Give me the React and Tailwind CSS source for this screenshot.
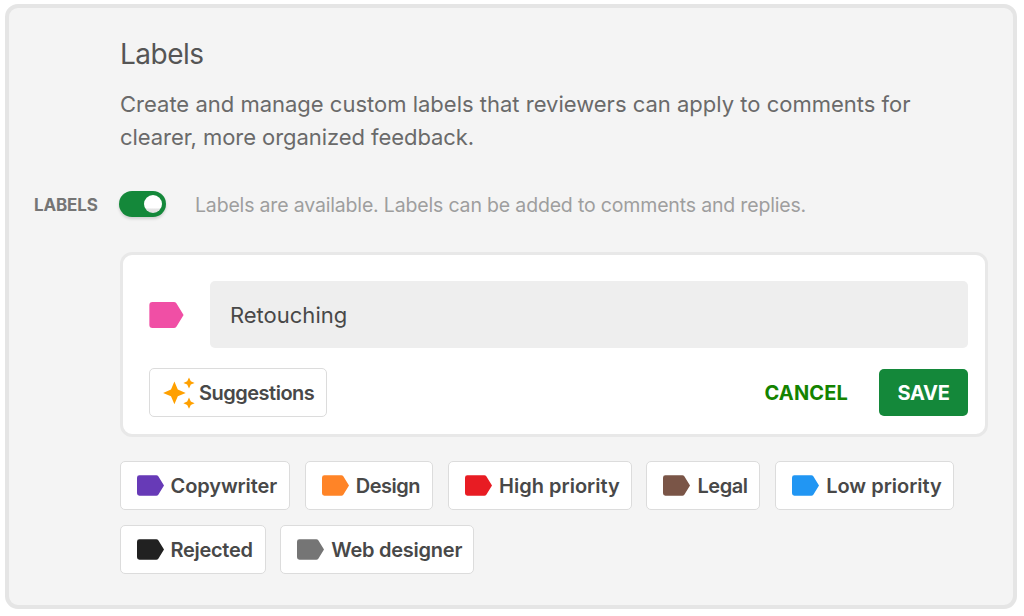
import { useState } from 'react';

const labels = [
  { name: 'Copywriter', color: '#673ab7', width: 'w-[170.5px]', tracking: 'tracking-[-0.1px]' },
  { name: 'Design', color: '#ff8427', width: 'w-[128.5px]', tracking: 'tracking-[-0.5px]' },
  { name: 'High priority', color: '#e81c23', width: 'w-[183.5px]', tracking: 'tracking-[0px]' },
  { name: 'Legal', color: '#7a5547', width: 'w-[114px]', tracking: 'tracking-[-0.45px]' },
  { name: 'Low priority', color: '#2196f3', width: 'w-[179px]', tracking: 'tracking-[0px]' },
  { name: 'Rejected', color: '#212121', width: 'w-[146px]', tracking: 'tracking-[-0.3px]' },
  { name: 'Web designer', color: '#757575', width: 'w-[194px]', tracking: 'tracking-[-0.25px]' },
];

function TagIcon({ color, className }) {
  return (
    <svg viewBox="0 0 27 20.5" fill={color} className={className}>
      <path d="M2.4 0h16.9a2.4 2.4 0 0 1 2 1.05L27 10.25l-5.7 9.2a2.4 2.4 0 0 1-2 1.05H2.4A2.4 2.4 0 0 1 0 18.1V2.4A2.4 2.4 0 0 1 2.4 0z" />
    </svg>
  );
}

function SparkleIcon() {
  return (
    <svg viewBox="0 0 32 32" fill="#ffa000" className="h-8 w-8 shrink-0">
      <path d="M11.4 4.6l3.4 7.9 7.9 3.4-7.9 3.4-3.4 7.9-3.4-7.9L.1 15.9 8 12.5z" />
      <path d="M26 .4l1.8 3.8 3.8 1.7-3.8 1.7L26 11.5l-1.8-3.9-3.8-1.7 3.8-1.7z" />
      <path d="M26 20.6l1.8 3.9 3.8 1.7-3.8 1.7-1.8 3.8-1.8-3.8-3.8-1.7 3.8-1.7z" />
    </svg>
  );
}

export default function App() {
  const [enabled, setEnabled] = useState(true);
  const [name, setName] = useState('Retouching');

  return (
    <div className="h-[616px] w-[1024px] bg-white pt-[4px] pl-[5px] font-['Inter',sans-serif]">
      <div className="h-[605px] w-[1012px] rounded-[13px] border-4 border-[#e5e5e5] bg-[#f4f4f4] pl-[25px]">
        <div className="pl-[86px] pt-[27px]">
          <h2 className="text-[28px] leading-[38px] tracking-[-0.5px] text-[#555]">Labels</h2>
          <p className="mt-[15px] whitespace-nowrap text-[22px] leading-[33px] text-[#6a6a6a]">
            Create and manage custom labels that reviewers can apply to comments for
            <br />
            <span className="tracking-[-0.06px]">clearer, more organized feedback.</span>
          </p>
        </div>

        <div className="mt-[36px] flex h-[27px] items-center">
          <span className="w-[85px] pt-[5px] text-[17px] font-bold tracking-[-0.15px] text-[#757575]">LABELS</span>
          <button
            role="switch"
            aria-checked={enabled}
            onClick={() => setEnabled(!enabled)}
            className={`flex h-[26px] w-[47px] items-center rounded-full px-[4px] shadow-[0_2px_3px_rgba(0,0,0,0.15)] ${enabled ? 'justify-end bg-[#14883a]' : 'justify-start bg-gray-400'}`}
          >
            <span className="h-[18px] w-[18px] rounded-full bg-linear-to-b from-white from-70% to-[#e4e4e4] to-80%" />
          </button>
          <span className="ml-[29px] whitespace-nowrap pt-[5px] text-[19.5px] tracking-[-0.17px] text-[#9e9e9e]">
            Labels are available. Labels can be added to comments and replies.
          </span>
        </div>

        <div className="ml-[86px] mt-[35px] h-[185px] w-[868px] rounded-[12px] border-3 border-[#e8e8e8] bg-white pl-[26px] pr-[17px] pt-[26px]">
          <div className="flex items-center">
            <TagIcon color="#f04fa5" className="h-[26px] w-[35px]" />
            <input
              value={name}
              onChange={(e) => setName(e.target.value)}
              className="ml-[26px] h-[67px] w-[759px] rounded-[5px] bg-[#eee] px-[20px] text-[22px] text-[#484848] outline-none"
            />
          </div>
          <div className="mt-[20px] flex items-center">
            <button className="flex h-[49px] w-[178px] items-center gap-[4px] rounded-[5px] border border-[#dcdcdc] pl-[13px] text-[20px] font-semibold tracking-[-0.5px] text-[#484848]">
              <SparkleIcon />
              <span>Suggestions</span>
            </button>
            <button className="ml-auto text-[20px] font-bold tracking-[0.15px] text-[#148300]">CANCEL</button>
            <button className="ml-[31px] h-[47px] w-[89px] rounded-[5px] bg-[#14883a] text-[20px] font-bold tracking-[-0.3px] text-white">
              SAVE
            </button>
          </div>
        </div>

        <div className="ml-[85.5px] mt-[24px] flex w-[860px] flex-wrap gap-x-[14.8px] gap-y-[15px]">
          {labels.map((label) => (
            <div
              key={label.name}
              className={`flex h-[49px] shrink-0 items-center gap-[7px] whitespace-nowrap rounded-[5px] border border-[#dcdcdc] bg-white pl-[16px] text-[20px] font-semibold text-[#484848] ${label.width} ${label.tracking}`}
            >
              <TagIcon color={label.color} className="h-[21px] w-[27px] shrink-0" />
              <span>{label.name}</span>
            </div>
          ))}
        </div>
      </div>
    </div>
  );
}
